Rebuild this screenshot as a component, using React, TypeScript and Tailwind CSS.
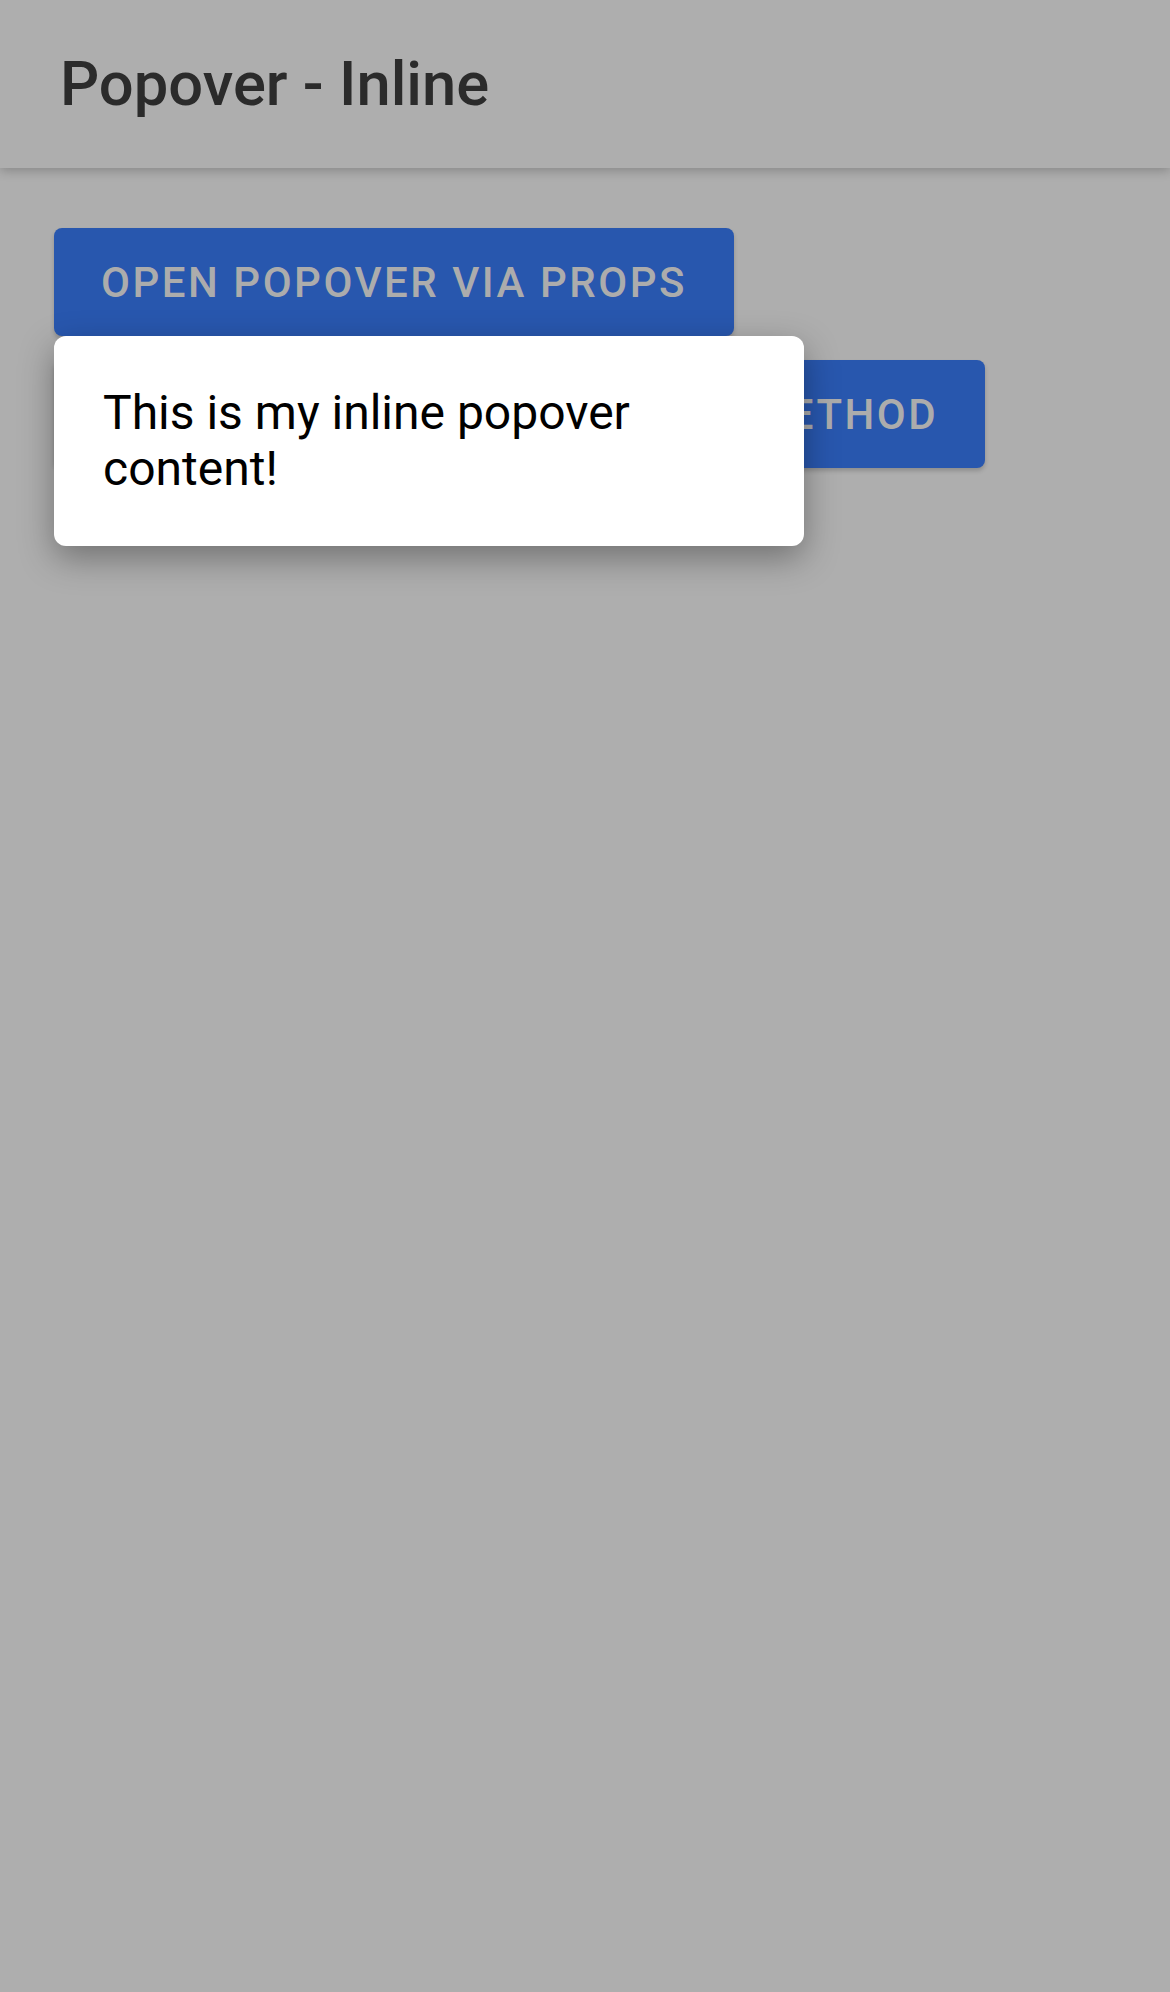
import React from "react";

function Button({ children }: { children: React.ReactNode }) {
  return (
    <button className="inline-flex h-[108px] w-fit items-center rounded-[8px] bg-[#2857ae] px-[47px] text-[42px] font-medium uppercase tracking-[0.06em] text-[#acacac] shadow-[0_3px_4px_rgba(0,0,0,0.18)]">
      {children}
    </button>
  );
}

export default function App() {
  return (
    <div className="min-h-[1992px] w-full bg-[#aeaeae] font-['Roboto',sans-serif]">
      <header className="relative z-10 flex h-[168px] items-center bg-[#aeaeae] pl-[60px] shadow-[0_3px_10px_rgba(0,0,0,0.22)]">
        <h1 className="text-[61.5px] font-medium text-[#2b2b2b]">Popover - Inline</h1>
      </header>

      <main className="flex flex-col gap-[24px] px-[54px] pt-[60px]">
        <div className="relative w-fit">
          <Button>Open Popover via Props</Button>
          <div className="absolute left-0 top-full z-20 w-[750px] rounded-[12px] bg-white p-[49px] shadow-[0_12px_34px_rgba(0,0,0,0.35)]">
            <p className="text-[48px] leading-[56px] text-black">This is my inline popover content!</p>
          </div>
        </div>
        <Button>Open Popover via Present Method</Button>
      </main>
    </div>
  );
}
